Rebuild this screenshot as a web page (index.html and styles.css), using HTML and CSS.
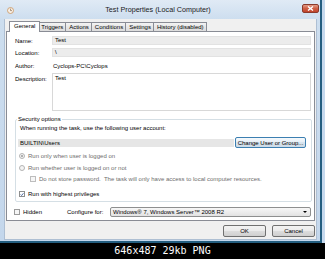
FILE: index.html
```html
<!DOCTYPE html>
<html lang="en">
<head>
	<meta charset="UTF-8" />
	<title>Test Properties (Local Computer)</title>
	<link rel="stylesheet" href="styles.css">
</head>
<body>
	<div class="window">
		<div class="titlebar">
			<svg class="app-icon" width="7" height="7" viewBox="0 0 7 7">
				<circle cx="3.5" cy="3.5" r="3" fill="#f7efe6" stroke="#c9955f" stroke-width="0.8" />
				<path d="M3.5 1.6 V3.6 H5" fill="none" stroke="#7a5a3a" stroke-width="0.6" />
			</svg>
			<span class="title">Test Properties (Local Computer)</span>
			<span class="close">
				<svg width="7" height="5" viewBox="0 0 7 5">
					<path d="M1 0.5 L6 4.5 M6 0.5 L1 4.5" stroke="#fff" stroke-width="1.4" />
				</svg>
			</span>
		</div>

		<div class="client">
			<div class="tabs">
				<div class="tab selected">General</div>
				<div class="tab">Triggers</div>
				<div class="tab">Actions</div>
				<div class="tab">Conditions</div>
				<div class="tab">Settings</div>
				<div class="tab">History (disabled)</div>
			</div>

			<div class="panel">
				<div class="field-row">
					<span class="label">Name:</span>
					<div class="textbox readonly">Test</div>
				</div>
				<div class="field-row location-row">
					<span class="label">Location:</span>
					<div class="textbox readonly">\</div>
				</div>
				<div class="field-row author-row">
					<span class="label">Author:</span>
					<span class="value">Cyclops-PC\Cyclops</span>
				</div>
				<div class="field-row desc-row">
					<span class="label">Description:</span>
					<div class="textbox multiline">Test</div>
				</div>

				<!-- Security options group -->
				<fieldset class="security">
					<legend>Security options</legend>
					<div class="hint">When running the task, use the following user account:</div>
					<div class="account-row">
						<div class="account">BUILTIN\Users</div>
						<button class="btn focused">Change User or Group...</button>
					</div>
					<div class="option disabled first">
						<span class="radio checked"></span>Run only when user is logged on
					</div>
					<div class="option disabled">
						<span class="radio"></span>Run whether user is logged on or not
					</div>
					<div class="option disabled nested">
						<span class="check"></span>Do not store password.&nbsp; The task will only have access to local computer resources.
					</div>
					<div class="option highest">
						<span class="check checked">
							<svg width="5" height="5" viewBox="0 0 5 5">
								<path d="M0.8 2.5 L2 3.8 L4.3 0.9" fill="none" stroke="#2a4d8f" stroke-width="1" />
							</svg>
						</span>Run with highest privileges
					</div>
				</fieldset>

				<div class="bottom-row">
					<div class="option hidden-opt"><span class="check"></span>Hidden</div>
					<span class="configure-label">Configure for:</span>
					<div class="combo">
						<span>Windows® 7, Windows Server™ 2008 R2</span>
						<span class="arrow"></span>
					</div>
				</div>
			</div>

			<div class="dialog-buttons">
				<button class="btn">OK</button>
				<button class="btn">Cancel</button>
			</div>
		</div>
	</div>
	<div class="caption">646x487 29kb PNG</div>
</body>
</html>
```

FILE: styles.css
```css
* {
	box-sizing: border-box;
}

body {
	margin: 0;
	width: 325px;
	height: 259px;
	overflow: hidden;
	background-color: #c6d9ee;
	font-family: "Liberation Sans", Arial, sans-serif;
	font-size: 6px;
	color: #000;
}

/* Window frame */
.window {
	width: 322px;
	height: 243px;
	display: flex;
	flex-direction: column;
	padding: 0 3px 1px 4px;
	border-right: 2px solid #245e80;
	border-bottom: 2px solid #245e80;
	background: linear-gradient(#e0eaf5, #cddeef 19px, #c4d7ec);
}

.titlebar {
	height: 19px;
	display: flex;
	align-items: flex-start;
	padding-left: 3px;
}

.app-icon {
	margin-top: 7px;
	flex-shrink: 0;
}

.title {
	flex: 1;
	text-align: center;
	font-size: 7.2px;
	line-height: 8px;
	margin-top: 6px;
	color: #1a1a1a;
}

.close {
	width: 17px;
	height: 9px;
	margin-top: 4px;
	margin-right: -2px;
	display: flex;
	align-items: center;
	justify-content: center;
	border: 1px solid #8a3a2c;
	border-radius: 2px;
	background: linear-gradient(#e39c87, #cf5f45 50%, #c0432b);
}

.client {
	flex: 1;
	display: flex;
	flex-direction: column;
	padding: 0 1px 0 1px;
	border: 1px solid #aebfd3;
	border-top: none;
	background-color: #f0f0f0;
}

/* Tabs */
.tabs {
	display: flex;
	align-items: flex-end;
	height: 11px;
	margin: 2px 0 -1px 3px;
}

.tab {
	height: 9px;
	line-height: 8px;
	padding: 0 2px 0 3px;
	margin: 0 0 1px -1px;
	border: 1px solid #898c95;
	border-bottom: none;
	background: linear-gradient(#f4f4f4, #e6e6e6 50%, #dcdcdc);
	white-space: nowrap;
}

.tab.selected {
	position: relative;
	z-index: 1;
	height: 11px;
	line-height: 9px;
	margin: 0 -2px 0 0;
	padding: 0 4px;
	background: #fff;
}

.panel {
	height: 190px;
	display: flex;
	flex-direction: column;
	padding: 4px 3px 0 8px;
	border: 1px solid #898c95;
	background-color: #fff;
}

/* General fields */
.field-row {
	display: grid;
	grid-template-columns: 37px 1fr;
	align-items: center;
}

.label,
.value {
	line-height: 8px;
}

.value {
	padding-left: 1px;
}

.textbox {
	height: 9px;
	line-height: 7px;
	padding-left: 2px;
	border: 1px solid #e2e2e2;
}

.textbox.readonly {
	background-color: #ececec;
}

.location-row {
	margin-top: 3px;
}

.author-row {
	margin-top: 4px;
	height: 10px;
}

.desc-row {
	margin-top: 2px;
	align-items: start;
}

.desc-row .label {
	padding-top: 2px;
}

.textbox.multiline {
	height: 38px;
	border-color: #d8d8d8;
	padding-top: 1px;
}

/* Security options */
.security {
	margin: 4px -1px 0 0;
	padding: 1px 5px 3px 2px;
	min-width: 0;
	border: 1px solid #d5dfe5;
	border-radius: 2px;
}

.security legend {
	padding: 0 1px;
	margin-left: -1px;
	line-height: 8px;
}

.hint {
	padding-left: 2px;
	line-height: 8px;
}

.account-row {
	display: flex;
	align-items: center;
	gap: 1px;
	margin-top: 5px;
	height: 11px;
}

.account {
	flex: 1;
	height: 8px;
	line-height: 8px;
	padding-left: 2px;
	background-color: #e6e6e6;
}

.btn {
	height: 12px;
	padding: 0;
	font-family: inherit;
	font-size: 6px;
	line-height: 10px;
	color: #000;
	border: 1px solid #707070;
	border-radius: 2px;
	background: linear-gradient(#f3f3f3, #ebebeb 45%, #dddddd 50%, #cfcfcf);
}

.btn.focused {
	width: 71px;
	height: 11px;
	border-color: #3c7fb1;
	background: linear-gradient(#f6fafd, #e6eef5 45%, #d8e4ee 50%, #cddbe7);
}

.option {
	display: flex;
	align-items: center;
	gap: 3px;
	height: 8px;
	line-height: 8px;
	padding-left: 1px;
}

.option.disabled {
	color: #6d6d6d;
}

.option.first {
	margin-top: 4px;
}

.option + .option {
	margin-top: 4px;
}

.option.nested {
	margin-top: 3px;
	padding-left: 12px;
}

.option.highest {
	margin-top: 7px;
}

.radio {
	width: 6px;
	height: 6px;
	flex-shrink: 0;
	display: flex;
	align-items: center;
	justify-content: center;
	border: 1px solid #b4b4b4;
	border-radius: 50%;
	background-color: #f4f4f4;
}

.radio.checked::after {
	content: "";
	width: 2px;
	height: 2px;
	border-radius: 50%;
	background-color: #9a9a9a;
}

.check {
	width: 6px;
	height: 6px;
	flex-shrink: 0;
	display: flex;
	align-items: center;
	justify-content: center;
	border: 1px solid #bdbdbd;
	background-color: #f6f6f6;
}

.check.checked {
	border-color: #8e8f8f;
	background-color: #fff;
}

/* Hidden / Configure for */
.bottom-row {
	display: grid;
	grid-template-columns: 52px 43px 1fr;
	align-items: center;
	margin-top: 5px;
	height: 10px;
}

.hidden-opt {
	margin-left: -1px;
	padding-left: 0;
	gap: 3px;
}

.hidden-opt .check {
	border-color: #9a9a9a;
}

.combo {
	height: 10px;
	display: flex;
	align-items: center;
	justify-content: space-between;
	padding: 0 3px 0 2px;
	border: 1px solid #8e8f8f;
	border-radius: 2px;
	background: linear-gradient(#f7f7f7, #ededed 50%, #e2e2e2);
}

.arrow {
	width: 0;
	height: 0;
	border-left: 2px solid transparent;
	border-right: 2px solid transparent;
	border-top: 2px solid #000;
}

.dialog-buttons {
	display: flex;
	justify-content: flex-end;
	gap: 6px;
	margin-top: 4px;
}

.dialog-buttons .btn {
	width: 43px;
}

/* Image host caption */
.caption {
	height: 16px;
	line-height: 16px;
	background-color: #000;
	color: #fff;
	text-align: center;
	font-family: "DejaVu Sans Mono", monospace;
	font-size: 10px;
}
```
